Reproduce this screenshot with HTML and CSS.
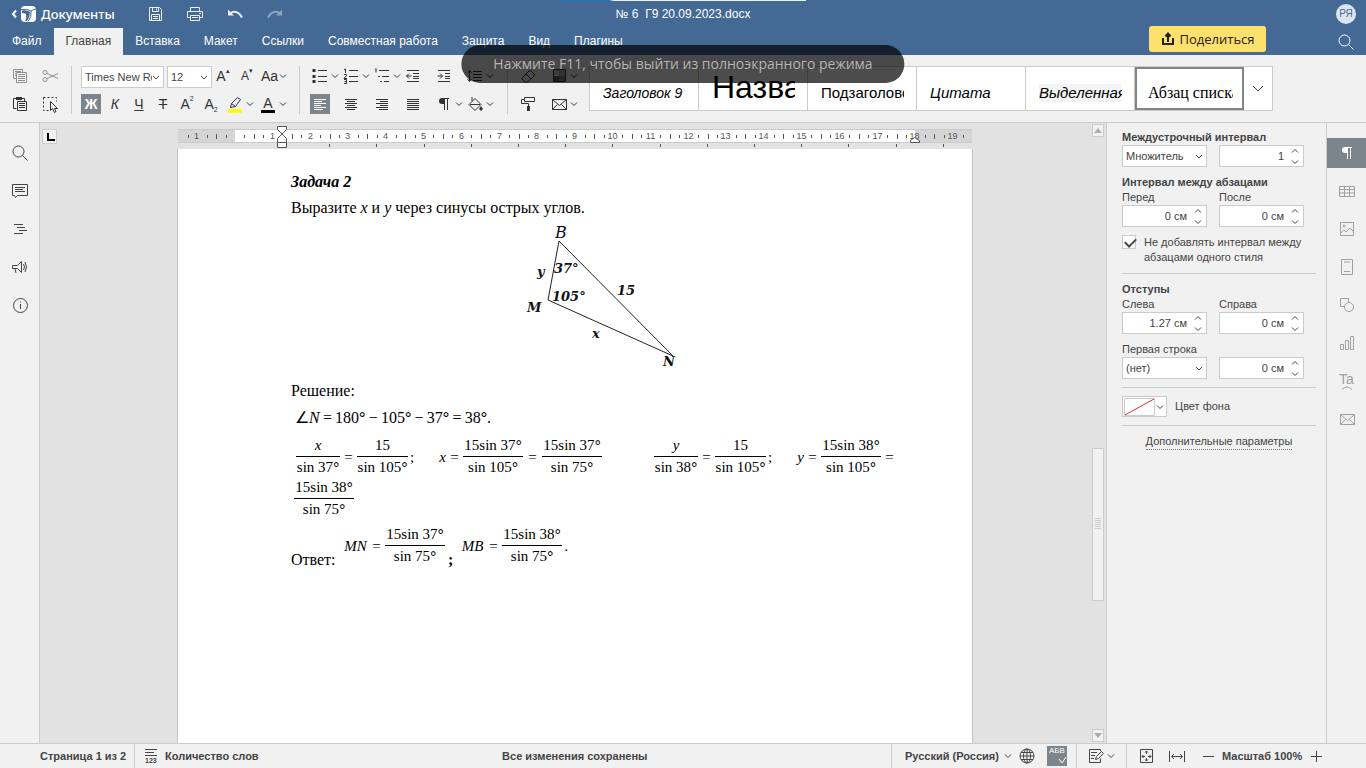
FILE: index.html
```html
<!DOCTYPE html>
<html lang="ru">

<head>
    <meta charset="UTF-8">
    <meta name="viewport" content="width=device-width, initial-scale=1.0">
    <title>№ 6 Г9 20.09.2023.docx</title>
    <link rel="stylesheet" href="styles.css">
</head>

<body>
    <!-- shared icons, 20x20 each -->
    <svg class="sprite" aria-hidden="true">
        <symbol id="chev" viewBox="0 0 10 20"><path d="M2 8.500l3 3 3-3"/></symbol>
        <symbol id="save" viewBox="0 0 20 20"><path d="M4.500 3.500h10l2 2v11h-12zM7.500 3.500v4h6v-4M11.500 4.500v2M6.500 16.500v-6h8v6M8 12.500h5M8 14.500h5"/></symbol>
        <symbol id="print" viewBox="0 0 20 20"><path d="M5.500 7.500v-4h9v4M5.500 13.500h-3v-6h15v6h-3M5.500 11.500h9v5h-9zM7 13.500h6M14 9.500h2"/></symbol>
        <symbol id="undo" viewBox="0 0 20 20"><path d="M5 9.500c4-3 9-2 12 4" stroke-width="2"/><path class="solid" d="M3 5.500v6h6z"/></symbol>
        <symbol id="search" viewBox="0 0 20 20"><circle cx="8.500" cy="8.500" r="5.500"/><path d="M12.500 12.500l5 5"/></symbol>
        <symbol id="copy" viewBox="0 0 20 20"><path d="M6.500 12.500h-3v-9h9v3M5 5.500h6M5 7.500h1M5 9.500h1M6.500 6.500h10v10h-10zM8 8.500h7M8 10.500h7M8 12.500h7M8 14.500h7"/></symbol>
        <symbol id="cut" viewBox="0 0 20 20"><circle cx="5" cy="6.500" r="2"/><circle cx="5" cy="13.500" r="2"/><path d="M7 7.500l11 5M7 12.500l11-5"/></symbol>
        <symbol id="paste" viewBox="0 0 20 20"><path d="M6.500 14.500h-3v-10h11v3M7.500 7.500h9v9h-9zM9 9.500h6M9 11.500h6M9 13.500h6"/><path class="solid" d="M6 3h6v3h-6z"/></symbol>
        <symbol id="select" viewBox="0 0 20 20"><path d="M3.500 3.500h13v4M3.500 3.500v13h5" stroke-dasharray="2 2"/><path d="M10.500 7.500v9l2-2 2 4 1.500-1-1.500-3h3z"/></symbol>
        <symbol id="bullets" viewBox="0 0 20 20"><path d="M8 4.500h9M8 10.500h9M8 15.500h9"/><path d="M4 3v3M4 9v3M4 14v3" stroke-width="3"/></symbol>
        <symbol id="numbers" viewBox="0 0 20 20"><path d="M8 4.500h9M8 10.500h9M8 15.500h9M3 4l1.500-1v4M3 8.500h2.500v1l-2.500 3h3M3 13.500h2.500v4h-2.500M3.500 15.500h2"/></symbol>
        <symbol id="levels" viewBox="0 0 20 20"><path d="M7 4.500h10M10 10.500h7M12 15.500h5M3 3.500l1-1v4M6 10.500h2M8 15.500h2"/></symbol>
        <symbol id="outdent" viewBox="0 0 20 20"><path d="M4 4.500h12M10 7.500h6M10 10.500h6M10 12.500h6M4 15.500h12M3.500 10h5M6 7.500l-2.500 2.500 2.500 2.500"/></symbol>
        <symbol id="indent" viewBox="0 0 20 20"><path d="M4 4.500h12M11 7.500h5M11 10.500h5M11 12.500h5M4 15.500h12M3.500 10h5M6 7.500l2.500 2.500-2.500 2.500"/></symbol>
        <symbol id="spacing" viewBox="0 0 20 20"><path d="M8 5.500h9M8 8.500h9M8 11.500h9M8 14.500h9M4.500 4.500v11M2.500 7l2-2.500 2 2.500M2.500 13l2 2.500 2-2.500"/></symbol>
        <symbol id="left" viewBox="0 0 20 20"><path d="M4 5.500h12M4 7.500h8M4 9.500h12M4 11.500h7M4 13.500h12M4 15.500h9"/></symbol>
        <symbol id="center" viewBox="0 0 20 20"><path d="M4 5.500h12M6 7.500h8M4 9.500h12M6 11.500h8M4 13.500h12M6 15.500h8"/></symbol>
        <symbol id="right" viewBox="0 0 20 20"><path d="M4 5.500h12M8 7.500h8M4 9.500h12M8 11.500h8M4 13.500h12M7 15.500h9"/></symbol>
        <symbol id="justify" viewBox="0 0 20 20"><path d="M4 5.500h12M4 7.500h12M4 9.500h12M4 11.500h12M4 13.500h12M4 15.500h12"/></symbol>
        <symbol id="para" viewBox="0 0 20 20"><path d="M10.500 4v12M13.500 4v12M9 4.500h6"/><path class="solid" d="M11 4h-3a3 3 0 0 0 0 6h3z"/></symbol>
        <symbol id="bucket" viewBox="0 0 20 20"><path d="M4 10.500l6-6 6 6-6 6zM5 10.500h10M7 3v4"/><path class="solid" d="M16 12l2 3-2 2-2-2z"/></symbol>
        <symbol id="eraser" viewBox="0 0 20 20"><path d="M4 12l7-7q1-1 2 0l3 3q1 1 0 2l-6 6h-3l-3-3zM8 8l5 5"/></symbol>
        <symbol id="theme" viewBox="0 0 20 20"><path d="M4.500 3.500h12v12h-12z"/><path class="solid" d="M5 4h5v5h-5z" opacity=".2"/><path class="solid" d="M5 10h5v5h-5z" opacity=".8"/><path class="solid" d="M10 4h6v6h-6z" opacity=".4"/><path class="solid" d="M10 10h6v5h-6z" opacity=".6"/></symbol>
        <symbol id="roller" viewBox="0 0 20 20"><path d="M6.500 3.500h10v4h-10zM6.500 5.500h-3v4h7v3"/><path class="solid" d="M9 12h3v5h-3z"/></symbol>
        <symbol id="mail" viewBox="0 0 20 20"><path d="M3.500 5.500h14v10h-14zM3.500 5.500l7 6 7-6M3.500 15.500l5-5M17.500 15.500l-5-5"/></symbol>
        <symbol id="marker" viewBox="0 0 20 20"><path d="M5.500 13.500l1-4 6-6 3 2-5 7zM6.500 9.500l4 3"/><path d="M3 17h14" stroke="#ff0" stroke-width="4"/></symbol>
        <symbol id="comment" viewBox="0 0 20 20"><path d="M2.500 3.500h15v11h-10l-2 2-1-2h-2zM5 6.500h10M5 8.500h8M5 10.500h10"/></symbol>
        <symbol id="outline" viewBox="0 0 20 20"><path d="M4 5.500h9M7 8.500h8M9 11.500h8M4 14.500h9"/></symbol>
        <symbol id="horn" viewBox="0 0 20 20"><path d="M2.500 8.500h5l4-4v11l-4-4h-5zM5 12l1 4M13.500 7q2 3 0 6M15 5q3 5 0 10"/></symbol>
        <symbol id="info" viewBox="0 0 20 20"><circle cx="10.500" cy="10.500" r="7"/><path d="M10.500 6.500v1M10.500 9v5"/></symbol>
        <symbol id="table" viewBox="0 0 20 20"><path d="M2.500 5.500h15v10h-15zM2.500 8.500h15M2.500 12h15M7.500 5.500v10M12.500 5.500v10"/></symbol>
        <symbol id="image" viewBox="0 0 20 20"><path d="M3.500 3.500h13v13h-13zM4 14l3-3 2 2 4-4 3 3"/><circle cx="7" cy="7" r="1"/></symbol>
        <symbol id="header" viewBox="0 0 20 20"><path d="M4.500 2.500h11v15h-11zM7 5h6M7 14.500h6"/></symbol>
        <symbol id="shape" viewBox="0 0 20 20"><path d="M7 11.500h-3.500v-8h8v3.500"/><circle cx="12" cy="12" r="4.500"/></symbol>
        <symbol id="chart" viewBox="0 0 20 20"><path d="M3.500 11.500h3v5h-3zM8.500 7.500h3v9h-3zM13.500 3.500h3v13h-3z"/></symbol>
        <symbol id="words" viewBox="0 0 20 20"><path d="M4 3.500h12M4 6.500h9M4 9.500h12"/></symbol>
        <symbol id="globe" viewBox="0 0 20 20"><circle cx="10" cy="10" r="7"/><ellipse cx="10" cy="10" rx="3.500" ry="7"/><path d="M10 3v14M3 10h14M4 6.500h12M4 13.500h12"/></symbol>
        <symbol id="review" viewBox="0 0 20 20"><path d="M14.500 5v-1.500h-11v13h11v-4M5 6.500h6M5 9.500h4M5 12.500h3M9.500 13.500l1-3 5-5 2 2-5 5z"/></symbol>
        <symbol id="fitpage" viewBox="0 0 20 20"><path d="M4.500 3.500h12v13h-12zM10.500 5v3M10.500 12v3M6 10.500h3M12 10.500h3M9 6.500l1.500-1.500 1.500 1.500M9 13.500l1.500 1.500 1.500-1.500M7.500 9l-1.500 1.500 1.500 1.500M13.500 9l1.500 1.500-1.500 1.500"/></symbol>
        <symbol id="fitwidth" viewBox="0 0 20 20"><path d="M2.500 5v11M17.500 5v11M5 10.500h10M7 8l-2.500 2.500 2.500 2.500M13 8l2.500 2.500-2.500 2.500"/></symbol>
    </svg>

    <header>
        <div class="progress"></div>
        <div class="title-row">
            <div class="title-left">
                <a href="#" class="brand">
                    <svg width="28" height="18" viewBox="0 0 28 18"><path d="M6 5.500l-3 3.500 3 3.500" stroke="#fff" stroke-width="2"/><rect x="11" y="1" width="15" height="16" rx="4" fill="#fff" stroke="none"/><path d="M11 4.500q6-1 10 1.500q3-2 5-2M21 6q1 6-3 10.500" stroke="#446995"/><path d="M12 5.500q5-1 8 1.500q0 5-3 9h-2q2-3 1-7q-2-1-4-1z" fill="#446995" stroke="none"/></svg>
                    Документы</a>
                <button class="head-btn" aria-label="Сохранить"><svg class="icon"><use href="#save"/></svg></button>
                <button class="head-btn" aria-label="Печать"><svg class="icon"><use href="#print"/></svg></button>
                <button class="head-btn" aria-label="Отменить"><svg class="icon"><use href="#undo"/></svg></button>
                <button class="head-btn redo" aria-label="Повторить"><svg class="icon"><use href="#undo"/></svg></button>
            </div>
            <div class="doc-name">№ 6 &nbsp;Г9 20.09.2023.docx</div>
            <div class="user">РЯ</div>
        </div>
        <div class="tab-row">
            <nav>
                <a href="#">Файл</a>
                <a href="#" class="active">Главная</a>
                <a href="#">Вставка</a>
                <a href="#">Макет</a>
                <a href="#">Ссылки</a>
                <a href="#">Совместная работа</a>
                <a href="#">Защита</a>
                <a href="#">Вид</a>
                <a href="#">Плагины</a>
            </nav>
            <button class="share"><svg width="14" height="14" viewBox="0 0 14 14"><path d="M2 6v6h10v-6M7 10v-8M4.500 4.500l2.500-3 2.500 3" stroke="#222" stroke-width="2"/></svg>Поделиться</button>
            <button class="find" aria-label="Поиск"><svg class="icon"><use href="#search"/></svg></button>
        </div>
    </header>

    <div class="toolbar">
        <div class="group clip">
            <button class="off" aria-label="Копировать"><svg class="icon"><use href="#copy"/></svg></button>
            <button class="off" aria-label="Вырезать"><svg class="icon"><use href="#cut"/></svg></button>
            <button aria-label="Вставить"><svg class="icon"><use href="#paste"/></svg></button>
            <button aria-label="Выделить"><svg class="icon"><use href="#select"/></svg></button>
        </div>
        <div class="group fonts">
            <div class="row">
                <select class="font-name" aria-label="Шрифт"><option>Times New Roman</option></select>
                <select class="font-size" aria-label="Размер"><option>12</option></select>
                <button>A<sup class="arrow">▴</sup></button>
                <button class="small">A<sup class="arrow">▾</sup></button>
                <button class="drop">Aa<svg class="chev"><use href="#chev"/></svg></button>
            </div>
            <div class="row">
                <button class="on"><b>Ж</b></button>
                <button><i>К</i></button>
                <button><u>Ч</u></button>
                <button><s>Т</s></button>
                <button>A<sup>2</sup></button>
                <button>A<sub>2</sub></button>
                <button class="drop" aria-label="Цвет выделения"><svg class="icon"><use href="#marker"/></svg><svg class="chev"><use href="#chev"/></svg></button>
                <button class="drop"><span class="color-a">A</span><svg class="chev"><use href="#chev"/></svg></button>
            </div>
        </div>
        <div class="group paras">
            <button class="drop" aria-label="Маркеры"><svg class="icon"><use href="#bullets"/></svg><svg class="chev"><use href="#chev"/></svg></button>
            <button class="drop" aria-label="Нумерация"><svg class="icon"><use href="#numbers"/></svg><svg class="chev"><use href="#chev"/></svg></button>
            <button class="drop" aria-label="Многоуровневый список"><svg class="icon"><use href="#levels"/></svg><svg class="chev"><use href="#chev"/></svg></button>
            <button aria-label="Уменьшить отступ"><svg class="icon"><use href="#outdent"/></svg></button>
            <button aria-label="Увеличить отступ"><svg class="icon"><use href="#indent"/></svg></button>
            <button class="drop" aria-label="Интервал"><svg class="icon"><use href="#spacing"/></svg><svg class="chev"><use href="#chev"/></svg></button>
            <button class="on" aria-label="По левому краю"><svg class="icon"><use href="#left"/></svg></button>
            <button aria-label="По центру"><svg class="icon"><use href="#center"/></svg></button>
            <button aria-label="По правому краю"><svg class="icon"><use href="#right"/></svg></button>
            <button aria-label="По ширине"><svg class="icon"><use href="#justify"/></svg></button>
            <button class="drop" aria-label="Непечатаемые символы"><svg class="icon"><use href="#para"/></svg><svg class="chev"><use href="#chev"/></svg></button>
            <button class="drop" aria-label="Заливка"><svg class="icon"><use href="#bucket"/></svg><svg class="chev"><use href="#chev"/></svg></button>
        </div>
        <div class="group misc">
            <button aria-label="Очистить"><svg class="icon"><use href="#eraser"/></svg></button>
            <button class="drop" aria-label="Цветовая схема"><svg class="icon"><use href="#theme"/></svg><svg class="chev"><use href="#chev"/></svg></button>
            <button aria-label="Копировать стиль"><svg class="icon"><use href="#roller"/></svg></button>
            <button class="drop" aria-label="Слияние"><svg class="icon"><use href="#mail"/></svg><svg class="chev"><use href="#chev"/></svg></button>
        </div>
        <div class="styles">
            <button><span class="st-h9">Заголовок 9</span></button>
            <button><span class="st-title">Название</span></button>
            <button><span class="st-sub">Подзаголовок</span></button>
            <button><span class="st-quote">Цитата</span></button>
            <button><span class="st-strong">Выделенная</span></button>
            <button class="current"><span class="st-list">Абзац списка</span></button>
            <button class="more" aria-label="Ещё"><svg width="12" height="8" viewBox="0 0 12 8"><path d="M1 1l5 5 5-5"/></svg></button>
        </div>
    </div>

    <div class="toast">Нажмите F11, чтобы выйти из полноэкранного режима</div>

    <main>
        <aside class="side">
            <button aria-label="Поиск"><svg class="icon"><use href="#search"/></svg></button>
            <button aria-label="Комментарии"><svg class="icon"><use href="#comment"/></svg></button>
            <button aria-label="Навигация"><svg class="icon"><use href="#outline"/></svg></button>
            <button aria-label="Обратная связь"><svg class="icon"><use href="#horn"/></svg></button>
            <button aria-label="О программе"><svg class="icon"><use href="#info"/></svg></button>
        </aside>

        <div class="editor">
            <div class="tab-stop"><button aria-label="Табуляция"></button></div>
            <div class="sheet">
                <svg class="ruler" id="ruler" viewBox="0 0 794 26"></svg>
                <article class="page">
                    <p><b><i>Задача 2</i></b></p>
                    <p>Выразите <i>x</i> и <i>y</i> через синусы острых углов.</p>
                    <svg class="figure" width="180" height="157" viewBox="0 0 180 157">
                        <path d="M44 20L33 79L158 135z" stroke="#222"/>
                        <text x="40" y="17" class="big">B</text>
                        <text x="22" y="55">y</text>
                        <text x="39" y="52">37°</text>
                        <text x="37" y="80">105°</text>
                        <text x="12" y="91">M</text>
                        <text x="102" y="74">15</text>
                        <text x="77" y="117">x</text>
                        <text x="148" y="145">N</text>
                    </svg>
                    <p>Решение:</p>
                    <p class="angle">∠<i>N</i>&thinsp;=&thinsp;180<b>°</b>&thinsp;−&thinsp;105<b>°</b>&thinsp;−&thinsp;37<b>°</b>&thinsp;=&thinsp;38<b>°</b>.</p>
                    <div class="math">
                        <span class="frac w44"><i>x</i><span>sin 37<b>°</b></span></span><span class="eq">=</span>
                        <span class="frac w51"><span>15</span><span>sin 105<b>°</b></span></span><span class="semi">;</span>
                        <i class="var">x</i><span class="eq">=</span>
                        <span class="frac w60"><span>15sin 37<b>°</b></span><span>sin 105<b>°</b></span></span><span class="eq wide">=</span>
                        <span class="frac w60 last"><span>15sin 37<b>°</b></span><span>sin 75<b>°</b></span></span>
                        <span class="frac w44"><i>y</i><span>sin 38<b>°</b></span></span><span class="eq">=</span>
                        <span class="frac w51"><span>15</span><span>sin 105<b>°</b></span></span><span class="semi">;</span>
                        <i class="var">y</i><span class="eq">=</span>
                        <span class="frac w60"><span>15sin 38<b>°</b></span><span>sin 105<b>°</b></span></span><span class="eq">=</span>
                    </div>
                    <div class="math second">
                        <span class="frac w60"><span>15sin 38<b>°</b></span><span>sin 75<b>°</b></span></span>
                    </div>
                    <div class="math answer">
                        <span class="label">Ответ:</span>
                        <i class="seg">MN</i><span class="eq">=</span>
                        <span class="frac w60"><span>15sin 37<b>°</b></span><span>sin 75<b>°</b></span></span>
                        <b class="label sep">;</b>
                        <i class="seg">MB</i><span class="eq">=</span>
                        <span class="frac w60"><span>15sin 38<b>°</b></span><span>sin 75<b>°</b></span></span><span class="dot">.</span>
                    </div>
                </article>
            </div>
            <div class="scroll">
                <button aria-label="Вверх"><svg width="8" height="5"><path class="tri" d="M0 5l4-5 4 5z"/></svg></button>
                <div class="track"><div class="thumb"></div></div>
                <button aria-label="Вниз"><svg width="8" height="5"><path class="tri" d="M0 0l4 5 4-5z"/></svg></button>
            </div>
        </div>

        <section class="panel">
            <h2>Междустрочный интервал</h2>
            <div class="pair">
                <select aria-label="Тип интервала"><option>Множитель</option></select>
                <div class="spin"><input type="text" value="1" aria-label="Интервал"><svg class="arrows" viewBox="0 0 12 20"><path d="M3 6.500l3-3 3 3M3 14.500l3 3 3-3"/></svg></div>
            </div>
            <h2 class="gap">Интервал между абзацами</h2>
            <div class="pair">
                <label for="before">Перед</label>
                <label for="after">После</label>
                <div class="spin"><input type="text" id="before" value="0 см"><svg class="arrows" viewBox="0 0 12 20"><path d="M3 6.500l3-3 3 3M3 14.500l3 3 3-3"/></svg></div>
                <div class="spin"><input type="text" id="after" value="0 см"><svg class="arrows" viewBox="0 0 12 20"><path d="M3 6.500l3-3 3 3M3 14.500l3 3 3-3"/></svg></div>
            </div>
            <div class="check gap">
                <input type="checkbox" id="same" checked>
                <label for="same">Не добавлять интервал между абзацами одного стиля</label>
            </div>
            <hr>
            <h2>Отступы</h2>
            <div class="pair">
                <label for="indl">Слева</label>
                <label for="indr">Справа</label>
                <div class="spin"><input type="text" id="indl" value="1.27 см"><svg class="arrows" viewBox="0 0 12 20"><path d="M3 6.500l3-3 3 3M3 14.500l3 3 3-3"/></svg></div>
                <div class="spin"><input type="text" id="indr" value="0 см"><svg class="arrows" viewBox="0 0 12 20"><path d="M3 6.500l3-3 3 3M3 14.500l3 3 3-3"/></svg></div>
            </div>
            <label class="gap block" for="first">Первая строка</label>
            <div class="pair">
                <select id="first"><option>(нет)</option></select>
                <div class="spin"><input type="text" value="0 см" aria-label="Отступ первой строки"><svg class="arrows" viewBox="0 0 12 20"><path d="M3 6.500l3-3 3 3M3 14.500l3 3 3-3"/></svg></div>
            </div>
            <hr>
            <div class="fill">
                <button id="bg"><svg width="31" height="18"><path d="M.5.5h30v17h-30z" stroke="#cbcbcb"/><path d="M1 17l29-16" stroke="#d0343c"/></svg><svg class="chev"><use href="#chev"/></svg></button>
                <label for="bg">Цвет фона</label>
            </div>
            <hr>
            <div class="extra"><a href="#">Дополнительные параметры</a></div>
        </section>

        <aside class="side right">
            <button class="on" aria-label="Абзац"><svg class="icon"><use href="#para"/></svg></button>
            <button aria-label="Таблица"><svg class="icon"><use href="#table"/></svg></button>
            <button aria-label="Изображение"><svg class="icon"><use href="#image"/></svg></button>
            <button aria-label="Колонтитулы"><svg class="icon"><use href="#header"/></svg></button>
            <button aria-label="Фигура"><svg class="icon"><use href="#shape"/></svg></button>
            <button aria-label="Диаграмма"><svg class="icon"><use href="#chart"/></svg></button>
            <button class="textart" aria-label="Text Art"><span>Ta</span><svg width="12" height="4"><path d="M1 3.500q5-5 10 0"/></svg></button>
            <button aria-label="Слияние"><svg class="icon"><use href="#mail"/></svg></button>
        </aside>
    </main>

    <footer>
        <div class="cell pages">Страница 1 из 2</div>
        <button class="count"><span class="words"><svg class="icon"><use href="#words"/></svg><small>123</small></span>Количество слов</button>
        <div class="status">Все изменения сохранены</div>
        <div class="cell lang">
            <button class="lang-name">Русский (Россия)<svg class="chev"><use href="#chev"/></svg></button>
            <button aria-label="Язык документа"><svg class="icon"><use href="#globe"/></svg></button>
            <button class="spell on">АБВ<svg width="9" height="8"><path d="M1 3l3 4 4-6"/></svg></button>
        </div>
        <div class="cell review"><button class="drop" aria-label="Рецензирование"><svg class="icon"><use href="#review"/></svg><svg class="chev"><use href="#chev"/></svg></button></div>
        <div class="cell zoom">
            <button aria-label="По размеру страницы"><svg class="icon"><use href="#fitpage"/></svg></button>
            <button aria-label="По ширине"><svg class="icon"><use href="#fitwidth"/></svg></button>
            <button aria-label="Уменьшить"><svg class="icon" viewBox="0 0 20 20"><path d="M5 10.500h11"/></svg></button>
            <span>Масштаб 100%</span>
            <button aria-label="Увеличить"><svg class="icon" viewBox="0 0 20 20"><path d="M5 10.500h11M10.500 5v11"/></svg></button>
        </div>
    </footer>

    <script>
        // ruler: 1 cm = 37.8px, margins are 1.5 cm on both sides
        const ruler = document.getElementById('ruler');
        const cm = 37.8;
        const zero = 57;
        const end = 737;
        let out = '<path class="margin" d="M0 6h794v14H0z"/>';
        out += '<path class="white" d="M' + zero + ' 6h' + (end - zero) + 'v14H' + zero + 'z"/>';
        out += '<path class="edge" d="M0 6.500h794M0 19.500h794"/>';

        for (let q = -5; q <= 77; q++) {
            if (q === 0) continue;
            const x = Math.round(zero + q * cm / 4) + 0.5;
            if (q % 4 === 0) {
                out += '<text x="' + (x - 1) + '" y="16">' + Math.abs(q / 4) + '</text>';
            } else if (q % 2 === 0) {
                out += '<path d="M' + x + ' 11v5"/>';
            } else {
                out += '<path d="M' + x + ' 12v3"/>';
            }
        }
        for (let x = 104 + 47.2; x < 790; x += 47.2) {
            out += '<path d="M' + (Math.round(x) + 0.5) + ' 21v3"/>';
        }
        // indent markers
        out += '<path class="mark" d="M99.500 3.500h9v3l-9 9v4h9v-4l-9-9zM99.500 19.500h9v5h-9z"/>';
        out += '<path class="mark" d="M732.500 19.500v-2l4-3 5 3v2z"/>';
        ruler.innerHTML = out;
    </script>
</body>

</html>
```
FILE: styles.css
```css
* {
    box-sizing: border-box;
}

body {
    margin: 0;
    height: 100vh;
    display: flex;
    flex-direction: column;
    overflow: hidden;
    font-family: "Liberation Sans", Arial, sans-serif;
    font-size: 11px;
    color: #444;
    background-color: #f1f1f1;
}

button {
    display: flex;
    align-items: center;
    padding: 0;
    border: none;
    background: none;
    color: inherit;
    font: inherit;
    cursor: pointer;
}

a {
    color: inherit;
    text-decoration: none;
}

svg {
    display: block;
    flex: none;
    fill: none;
    stroke: currentColor;
}

.sprite {
    position: absolute;
    width: 0;
    height: 0;
}

.solid {
    fill: currentColor;
    stroke: none;
}

.icon {
    width: 20px;
    height: 20px;
}

.chev {
    width: 10px;
    height: 20px;
}

/* header */
header {
    position: relative;
    background-color: #446995;
    color: #fff;
}

.progress {
    position: absolute;
    top: 0;
    left: 41%;
    width: 18%;
    height: 1px;
    background: linear-gradient(90deg, #1a77c9 20%, #e8f1fa 22%);
}

.title-row {
    display: grid;
    grid-template-columns: 1fr auto 1fr;
    align-items: center;
    height: 26px;
    padding: 2px 10px 0;
}

.title-left {
    display: flex;
    align-items: center;
}

.brand {
    display: flex;
    align-items: center;
    width: 135px;
    gap: 3px;
    font-family: "Noto Sans", sans-serif;
    font-size: 13px;
    font-weight: 500;
}

.head-btn {
    width: 40px;
    opacity: 0.9;
}

.redo {
    opacity: 0.4;
}

.redo svg {
    transform: scaleX(-1);
}

.doc-name {
    font-size: 12px;
}

.user {
    justify-self: end;
    width: 20px;
    height: 20px;
    border-radius: 50%;
    background-color: #dde5f0;
    color: #446995;
    font-size: 10px;
    line-height: 20px;
    text-align: center;
}

.tab-row {
    display: flex;
    height: 29px;
}

nav {
    display: flex;
    flex: 1;
    align-self: flex-end;
    font-size: 12px;
    line-height: 27px;
}

nav a {
    padding: 0 12px;
}

nav a.active {
    background-color: #f1f1f1;
    color: #444;
}

.share {
    justify-content: center;
    gap: 5px;
    width: 117px;
    height: 26px;
    margin-right: 70px;
    border-radius: 3px;
    background-color: #fee06d;
    color: #222;
    font-family: "Open Sans", sans-serif;
    font-size: 13px;
}

.find {
    align-self: center;
    width: 30px;
    margin-top: 2px;
}

/* toolbar */
.toolbar {
    display: flex;
    height: 68px;
    padding-top: 11px;
    border-bottom: 1px solid #cbcbcb;
    color: #333;
}

.group {
    height: 48px;
    padding: 0 9px;
    border-right: 1px solid #cbcbcb;
}

.group button {
    justify-content: center;
    width: 20px;
    height: 20px;
    font-size: 14px;
}

.group button.drop {
    justify-content: flex-start;
    width: 31px;
}

.group .on,
.side .on,
footer .on {
    background-color: #7d858c;
    color: #fff;
}

.off {
    opacity: 0.5;
}

.clip {
    display: grid;
    grid-template-columns: 30px 20px;
    row-gap: 8px;
    width: 72px;
    padding: 0 0 0 10px;
}

.fonts {
    width: 228px;
}

.row {
    display: flex;
    gap: 4px;
    height: 20px;
    margin-bottom: 8px;
}

.row .drop {
    margin-right: -2px;
}

.row sup,
.row sub {
    align-self: flex-start;
    font-size: 7px;
    line-height: 9px;
}

.row sub {
    align-self: flex-end;
}

.group .small {
    font-size: 12px;
}

.color-a {
    width: 14px;
    margin: 0 3px;
    border-bottom: 3px solid #000;
    line-height: 14px;
}

select,
input[type="text"] {
    width: 100%;
    height: 22px;
    padding: 0 3px;
    border: 1px solid #cbcbcb;
    border-radius: 0;
    background-color: #fff;
    color: #444;
    font: inherit;
}

select {
    appearance: none;
    background-image: url("data:image/svg+xml,%3Csvg xmlns='http://www.w3.org/2000/svg' width='8' height='5' fill='none' stroke='%23444'%3E%3Cpath d='M1 1l3 3 3-3'/%3E%3C/svg%3E");
    background-repeat: no-repeat;
    background-position: right 3px center;
}

.row select {
    flex: none;
    margin-right: -1px;
}

.row .font-name {
    width: 83px;
    padding-right: 11px;
}

.row .font-size {
    width: 45px;
    margin-right: -3px;
}

.paras,
.misc {
    display: grid;
    grid-template-columns: repeat(6, 31px);
    row-gap: 8px;
    width: 208px;
    padding: 0 0 0 10px;
}

.misc {
    grid-template-columns: 31px 31px;
    width: 81px;
    border-right: none;
}

.styles {
    display: flex;
    height: 45px;
    border: 1px solid #cbcbcb;
    background-color: #fff;
    color: #000;
}

.styles button {
    width: 109px;
    padding: 9px 12px 0 13px;
    border-right: 1px solid #cbcbcb;
}

.styles span {
    flex: 1;
    overflow: hidden;
    text-align: left;
    white-space: nowrap;
    font-size: 15px;
    line-height: 18px;
}

.styles .st-h9 {
    font-size: 14px;
    font-style: italic;
}

.styles .st-title {
    margin-top: -12px;
    font-size: 32px;
    line-height: 36px;
}

.st-quote,
.st-strong {
    font-style: italic;
}

.styles .st-strong {
    background-color: #f4f4f4;
}

.styles .st-list {
    font-family: "Liberation Serif", serif;
    font-size: 16px;
}

.styles .current {
    padding: 9px 9px 0 11px;
    border: 2px solid #848484;
}

.styles .more {
    width: 28px;
    justify-content: center;
    padding: 0;
    border: none;
    color: #444;
}

.toast {
    position: absolute;
    top: 45px;
    left: 50%;
    transform: translateX(-50%);
    padding: 0 32px;
    border-radius: 19px;
    background-color: rgba(0, 0, 0, 0.7);
    color: #b4b4b4;
    font-family: "Open Sans", sans-serif;
    font-size: 14px;
    line-height: 38px;
    white-space: nowrap;
}

/* workspace */
main {
    display: flex;
    flex: 1;
    min-height: 0;
}

.side {
    display: flex;
    flex-direction: column;
    gap: 8px;
    width: 40px;
    padding-top: 15px;
    border-right: 1px solid #cbcbcb;
}

.side button {
    justify-content: center;
    width: 100%;
    height: 30px;
}

.side.right {
    border-right: none;
    border-left: 1px solid #cbcbcb;
    color: #a0a0a0;
}

.side .textart {
    flex-direction: column;
    font-size: 14px;
    line-height: 14px;
}

.editor {
    display: flex;
    flex: 1;
    background-color: #e2e2e2;
}

.tab-stop {
    width: 18px;
    padding: 6px 1px 0 2px;
}

.tab-stop button {
    width: 15px;
    height: 15px;
    border: 1px solid #cbcbcb;
    background-color: #f1f1f1;
}

.tab-stop button::before {
    content: "";
    width: 6px;
    height: 6px;
    margin-left: 4px;
    border: solid #000;
    border-width: 0 0 2px 2px;
}

.sheet {
    display: flex;
    flex: 1;
    flex-direction: column;
    align-items: center;
}

.ruler {
    width: 794px;
    height: 26px;
    stroke: #555;
}

.ruler text {
    fill: #555;
    stroke: none;
    font-size: 9px;
    text-anchor: middle;
}

.margin {
    fill: #d5d5d5;
    stroke: none;
}

.white {
    fill: #fff;
    stroke: none;
}

.edge {
    stroke: #cbcbcb;
}

.mark {
    fill: #fff;
}

.page {
    flex: 1;
    width: 796px;
    padding: 20px 60px 0 113px;
    border: solid #c4c4c4;
    border-width: 0 1px;
    background-color: #fff;
    color: #000;
    font-family: "Liberation Serif", "Times New Roman", serif;
    font-size: 16px;
}

.page p {
    margin: 0;
    line-height: 26px;
}

.figure {
    margin-left: 224px;
}

.figure text {
    fill: #111;
    stroke: none;
    font-family: "DejaVu Serif", serif;
    font-size: 13px;
    font-style: italic;
    font-weight: bold;
}

.figure .big {
    font-size: 16px;
    font-weight: normal;
}

.page .angle {
    margin: 1px 0 4px;
    padding-left: 4px;
}

.math {
    display: flex;
    align-items: flex-start;
    height: 42px;
    padding-left: 5px;
    font-size: 15px;
    line-height: 21px;
    white-space: nowrap;
}

.math.second {
    padding-left: 3px;
}

.frac {
    display: flex;
    flex: none;
    flex-direction: column;
    align-items: center;
}

.frac > :last-child {
    align-self: stretch;
    border-top: 1px solid #000;
    text-align: center;
}

.w44 {
    width: 44px;
}

.w51 {
    width: 51px;
}

.w60 {
    width: 60px;
}

.last {
    margin-right: 52px;
}

.eq,
.semi,
.var,
.seg,
.dot {
    flex: none;
    width: 17px;
    line-height: 44px;
    text-align: center;
}

.eq.wide {
    width: 19px;
}

.semi {
    width: 8px;
    padding-left: 2px;
    text-align: left;
}

.var {
    width: 30px;
    text-align: right;
}

.answer {
    height: 46px;
    margin-top: 5px;
    padding-left: 0;
}

.label {
    align-self: flex-end;
    width: 52px;
    font-size: 16px;
}

.sep {
    width: 15px;
    padding-left: 3px;
}

.seg {
    width: 25px;
}

.dot {
    width: 8px;
}

.scroll {
    display: flex;
    flex-direction: column;
    width: 15px;
    padding: 1px 2px 1px 0;
    border-right: 1px solid #cbcbcb;
}

.scroll button {
    justify-content: center;
    width: 12px;
    height: 13px;
    border: 1px solid #cbcbcb;
    background-color: #f1f1f1;
}

.tri {
    fill: #adadad;
    stroke: none;
}

.track {
    flex: 1;
    display: flex;
    flex-direction: column;
    justify-content: flex-end;
    padding-bottom: 128px;
}

.thumb {
    width: 12px;
    height: 33%;
    border: 1px solid #cbcbcb;
    background: repeating-linear-gradient(#cbcbcb 0 1px, #f1f1f1 1px 2px) center / 6px 12px no-repeat #f1f1f1;
}

/* right panel */
.panel {
    width: 219px;
    padding: 7px 10px 0 15px;
    line-height: 15px;
}

.panel h2 {
    margin: 0;
    font-size: 11px;
}

.panel .gap {
    margin-top: 8px;
}

.block {
    display: block;
}

.pair {
    display: grid;
    grid-template-columns: 85px 85px;
    column-gap: 12px;
}

.spin {
    position: relative;
}

.spin input {
    padding-right: 19px;
    text-align: right;
}

.arrows {
    position: absolute;
    top: 1px;
    right: 3px;
    width: 12px;
    height: 20px;
}

.check {
    display: flex;
    gap: 8px;
}

.check input {
    appearance: none;
    flex: none;
    width: 14px;
    height: 14px;
    margin: 0;
    border: 1px solid #cbcbcb;
    background-color: #fff;
}

.check input:checked::before {
    content: "";
    display: block;
    width: 9px;
    height: 5px;
    margin: 2px;
    border: solid #444;
    border-width: 0 0 2px 2px;
    transform: rotate(-45deg);
}

hr {
    height: 1px;
    margin: 8px 0;
    border: none;
    background-color: #cbcbcb;
}

.fill {
    display: flex;
    align-items: center;
    gap: 8px;
}

.fill button {
    width: 45px;
    height: 21px;
    padding-left: 1px;
    border: 1px solid #cbcbcb;
    background-color: #fff;
}

.extra {
    text-align: center;
}

.extra a {
    display: inline-block;
    border-bottom: 1px dotted #777;
}

/* status bar */
footer {
    display: flex;
    align-items: center;
    height: 25px;
    border-top: 1px solid #cbcbcb;
    font-weight: bold;
    white-space: nowrap;
}

.cell {
    display: flex;
    align-items: center;
    height: 24px;
    border-left: 1px solid #cbcbcb;
}

.pages {
    width: 135px;
    padding-left: 40px;
    border-left: none;
    border-right: 1px solid #cbcbcb;
}

.count {
    gap: 4px;
    padding-left: 6px;
}

.words {
    position: relative;
}

.words small {
    position: absolute;
    top: 11px;
    left: 4px;
    font-size: 7px;
    line-height: 8px;
}

.status {
    flex: 1;
    text-align: center;
}

.lang {
    width: 185px;
    padding-left: 13px;
}

.lang-name {
    gap: 4px;
    width: 112px;
}

.spell {
    flex-direction: column;
    align-items: center;
    width: 20px;
    height: 20px;
    margin-left: 10px;
    font-size: 8px;
    font-weight: normal;
    line-height: 10px;
}

.spell svg {
    align-self: flex-end;
}

.review {
    width: 50px;
    padding-left: 9px;
}

.review button {
    width: 32px;
}

.zoom {
    width: 240px;
    padding-left: 9px;
    gap: 11px;
}

.zoom span {
    margin: 0 -7px;
}
```
